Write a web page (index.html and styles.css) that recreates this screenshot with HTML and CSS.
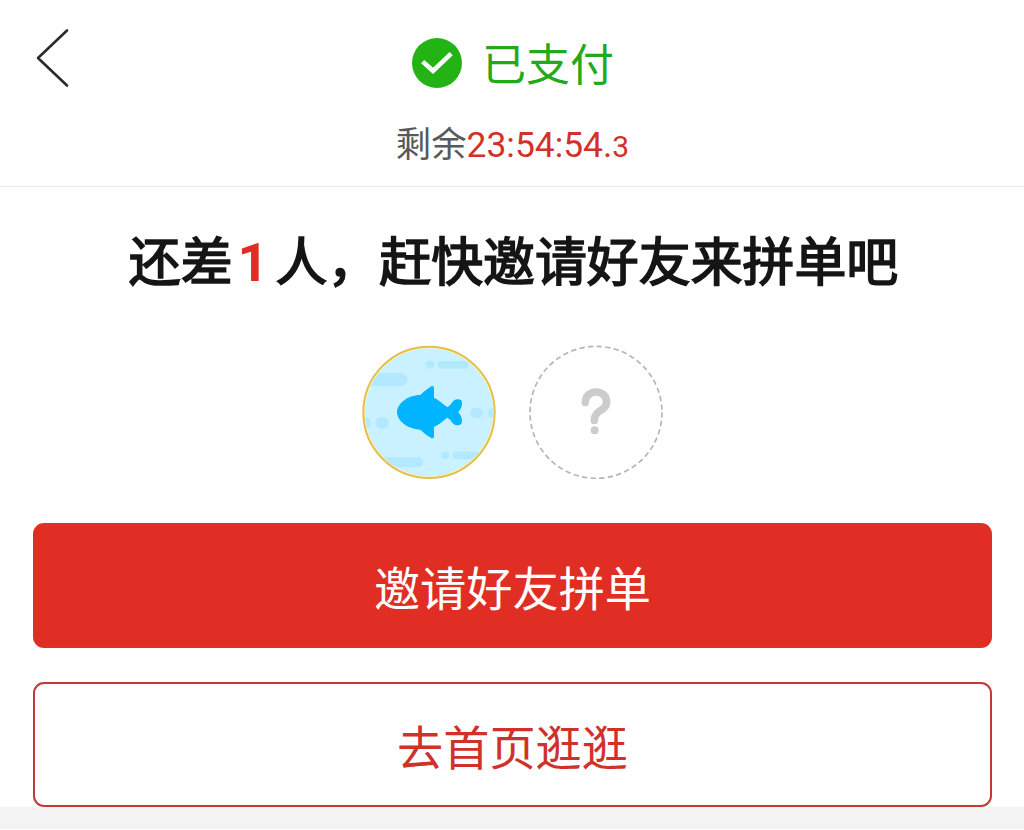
FILE: index.html
```html
<!DOCTYPE html>
<html lang="zh-CN">
<head>
    <meta charset="UTF-8">
    <meta name="viewport" content="width=device-width, initial-scale=1.0">
    <title>拼单</title>
    <link rel="stylesheet" href="styles.css">
</head>
<body>
    <div class="page">
        <div class="header">
            <a class="back">
                <svg width="36" height="62" viewBox="0 0 36 62">
                    <path d="M33 3.5L4 31L33 58.5" fill="none" stroke="#2b2b2b" stroke-width="2.6" stroke-linecap="round" stroke-linejoin="round"/>
                </svg>
            </a>
            <div class="status">
                <svg class="status-icon" width="50" height="50" viewBox="0 0 50 50">
                    <circle cx="25" cy="25" r="25" fill="#24b314"/>
                    <path d="M10.7 23.6L21 32.8L39.2 15.6" fill="none" stroke="#fff" stroke-width="4.6"/>
                </svg>
                <span class="status-text">已支付</span>
            </div>
            <div class="countdown">剩余<span class="time">23:54:54.<span class="tenth">3</span></span></div>
        </div>

        <h1 class="title">还差<span class="count">1</span>人，赶快邀请好友来拼单吧</h1>

        <div class="members">
            <svg class="avatar" viewBox="36 30 402 402">
                <defs>
                    <clipPath id="round"><circle cx="237" cy="232" r="192"/></clipPath>
                </defs>
                <circle cx="237" cy="232" r="197" fill="#fff3c4" stroke="#e6be4c" stroke-width="6"/>
                <circle cx="237" cy="232" r="192" fill="#c9f1ff"/>
                <g clip-path="url(#round)" fill="#b3e9fe">
                    <rect x="30" y="114" width="143" height="39" rx="19.5"/>
                    <rect x="228" y="78" width="25" height="22" rx="11"/>
                    <rect x="262" y="78" width="94" height="23" rx="11.5"/>
                    <rect x="24" y="247" width="39" height="34" rx="17"/>
                    <rect x="77" y="247" width="40" height="35" rx="17.5"/>
                    <rect x="361" y="218" width="38" height="32" rx="16"/>
                    <rect x="414" y="218" width="38" height="32" rx="16"/>
                    <rect x="90" y="367" width="129" height="29" rx="14.5"/>
                    <rect x="273" y="350" width="25" height="22" rx="11"/>
                    <rect x="307" y="350" width="110" height="22" rx="11"/>
                </g>
                <path fill="#00b4ff" d="M141 232C141 208 171 180 211 180C222 169 235 160 244 154Q252 151 252 160V188C267 195 280 207 291 216C299 214 304 205 308 200C314 192 326 191 333 195C339 202 336 220 324 232C336 243 339 260 333 268C326 273 314 272 308 264C304 259 299 250 291 248C280 257 267 269 252 276V304Q252 312 244 309C235 304 222 295 211 284C171 283 141 256 141 232Z"/>
            </svg>
            <svg class="avatar" viewBox="27 30 402 402">
                <circle cx="228" cy="232" r="198" fill="none" stroke="#b5b5b5" stroke-width="5" stroke-dasharray="16 9.92"/>
                <path d="M196 202C197 183 210 171 228 171C247 171 260 184 260 201C260 229 224 222 223 256" fill="none" stroke="#ccc" stroke-width="23" stroke-linecap="round" stroke-linejoin="round"/>
                <circle cx="224" cy="286" r="12" fill="#ccc"/>
            </svg>
        </div>

        <div class="actions">
            <a class="btn btn-primary">邀请好友拼单</a>
            <a class="btn btn-outline">去首页逛逛</a>
        </div>
    </div>
    <div class="footer-gap"></div>
</body>
</html>
```

FILE: styles.css
```css
body {
    margin: 0;
    background-color: #fff;
    font-family: Roboto, "Noto Sans CJK SC", sans-serif;
    color: #151516;
}
.page {
    height: 807px;
}
.header {
    position: relative;
    box-sizing: border-box;
    height: 187px;
    padding-top: 38px;
    border-bottom: 1px solid #ececec;
    text-align: center;
}
.back {
    position: absolute;
    left: 34px;
    top: 27px;
}
.back svg {
    display: block;
}
.status {
    display: flex;
    justify-content: center;
    align-items: center;
    gap: 20px;
    height: 50px;
    padding-left: 2px;
}
.status-text {
    padding-top: 5px;
    color: #24a81c;
    font-size: 44px;
    line-height: 50px;
}
.countdown {
    margin-top: 32px;
    padding-left: 1px;
    font-size: 35.4px;
    line-height: 50px;
    color: #58595b;
}
.time {
    color: #d0312a;
}
.tenth {
    font-size: 30px;
}
.title {
    margin: 41px 0 0;
    padding-left: 3px;
    font-size: 51.9px;
    font-weight: normal;
    line-height: 72px;
    text-align: center;
    white-space: nowrap;
    -webkit-text-stroke: 1.7px #151516;
}
.count {
    margin: 0 7px 0 5px;
    font-size: 54px;
    font-weight: bold;
    line-height: 1;
    color: #e02e24;
    -webkit-text-stroke: 0;
}
.members {
    display: flex;
    justify-content: center;
    gap: 33px;
    margin-top: 45px;
}
.avatar {
    display: block;
    width: 134px;
    height: 134px;
}
.actions {
    display: flex;
    flex-direction: column;
    gap: 34px;
    padding: 44px 32px 0 33px;
}
.btn {
    box-sizing: border-box;
    height: 125px;
    border: 2px solid #c23a36;
    border-radius: 11px;
    font-size: 46.2px;
    line-height: 131px;
    text-align: center;
}
.btn-primary {
    border-color: #df2f26;
    background-color: #e02e24;
    color: #fff;
}
.btn-outline {
    color: #d0312a;
}
.footer-gap {
    height: 22px;
    background-color: #f3f3f3;
}
```
